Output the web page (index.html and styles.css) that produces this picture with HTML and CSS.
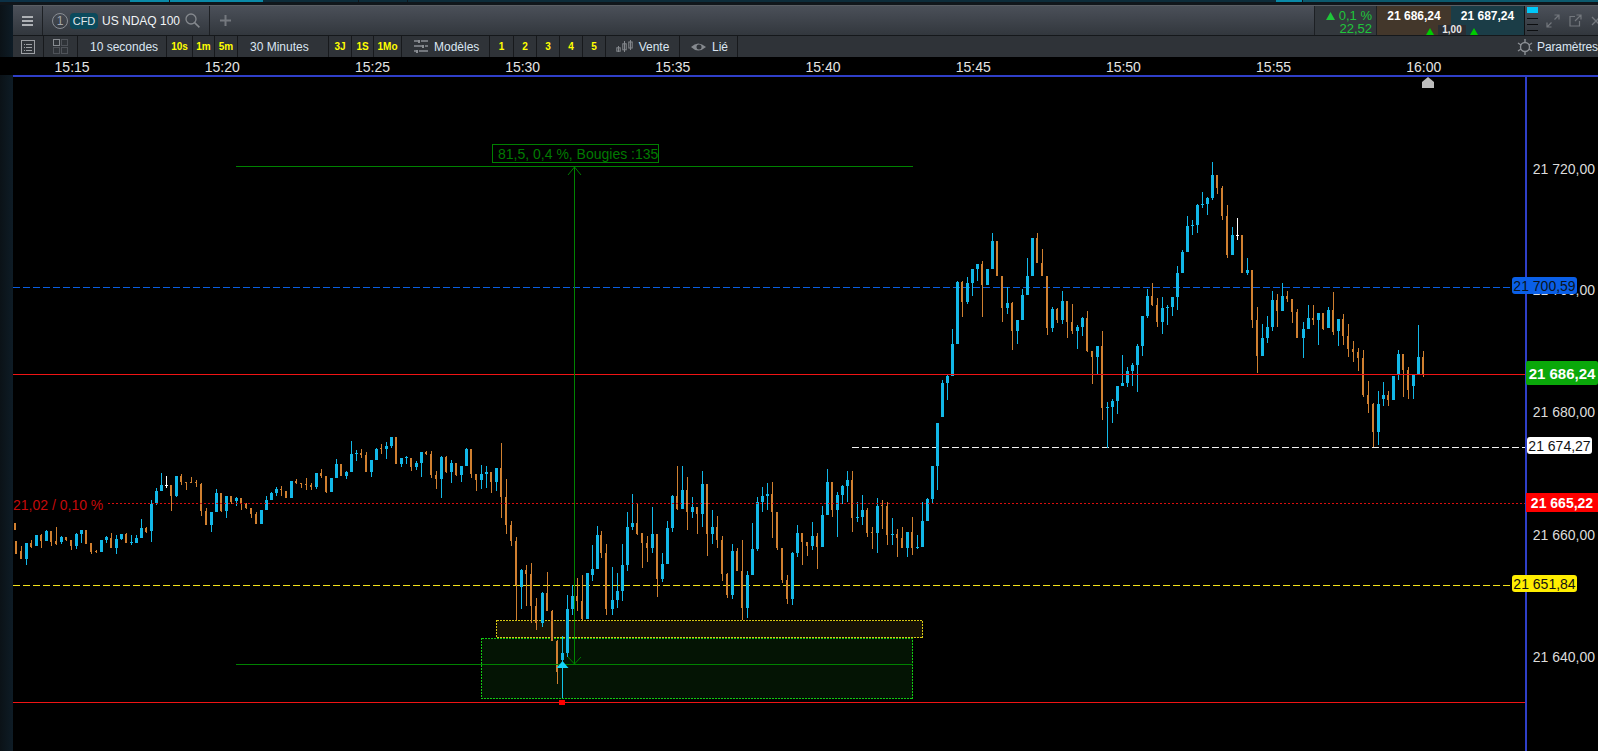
FILE: index.html
```html
<!DOCTYPE html>
<html lang="fr">
<head>
<meta charset="utf-8">
<title>US NDAQ 100</title>
<link rel="stylesheet" href="styles.css">
</head>
<body>
<div class="strip">
  <i class="seg seg-a"></i><i class="seg seg-b"></i><i class="seg seg-c"></i><i class="seg seg-d"></i><i class="seg seg-e"></i><i class="seg seg-f"></i><i class="seg seg-g"></i><i class="seg seg-h"></i>
</div>
<div class="frame">
  <div class="rail"></div>
  <div class="main">
    <header class="bar-top">
      <button class="menu" aria-label="Menu"><svg width="11" height="10" viewBox="0 0 11 10"><path d="M0 0h11v2H0zM0 4h11v2H0zM0 8h11v2H0z" fill="#aeb1b5"/></svg></button>
      <div class="symbol">
        <span class="circle">1</span>
        <span class="badge">CFD</span>
        <span class="name">US NDAQ 100</span>
        <svg class="search" width="15" height="15" viewBox="0 0 15 15"><circle cx="6" cy="6" r="5" fill="none" stroke="#85898e" stroke-width="1.3"/><path d="M9.6 9.6L14.4 14.4" stroke="#85898e" stroke-width="1.5"/></svg>
      </div>
      <svg class="plus" width="11" height="11" viewBox="0 0 11 11"><path d="M4.5 0h2v11h-2zM0 4.5h11v2H0z" fill="#74787e"/></svg>
      <div class="quotes">
        <div class="change">
          <div class="change-top"><svg width="9" height="8" viewBox="0 0 9 8"><path d="M4.5 0L9 8H0z" fill="#1fc63a"/></svg><span>0,1 %</span></div>
          <div>22,52</div>
        </div>
        <div class="price bid">21 686,24<svg class="tri" width="8" height="7" viewBox="0 0 8 7"><path d="M4 0L8 7H0z" fill="#0c0"/></svg></div>
        <div class="price ask">21 687,24<svg class="tri" width="8" height="7" viewBox="0 0 8 7"><path d="M4 0L8 7H0z" fill="#0c0"/></svg></div>
        <span class="spread">1,00</span>
        <div class="depth"><i class="depth-on"></i><i></i><i></i><i></i></div>
        <div class="win">
          <svg width="14" height="14" viewBox="0 0 14 14"><path d="M8.5 1H13v4.500M13 1L8.500 5.500M5.500 13H1V8.500M1 13l4.500-4.500" fill="none" stroke="#73777d" stroke-width="1.200"/></svg>
          <svg width="13" height="13" viewBox="0 0 13 13"><path d="M6 2.500H1v9.500h9.500V7M7.500 1H12v4.500M12 1L6 7" fill="none" stroke="#73777d" stroke-width="1.200"/></svg>
          <svg width="10" height="10" viewBox="0 0 10 10"><path d="M1 1l8 8M9 1l-8 8" fill="none" stroke="#73777d" stroke-width="1.300"/></svg>
        </div>
      </div>
    </header>
    <nav class="bar-tools">
      <div class="cell w31"><svg width="14" height="14" viewBox="0 0 14 14"><rect x=".5" y=".5" width="13" height="13" fill="none" stroke="#9da0a4"/><path d="M3 4h1v1H3zM5 4h6v1H5zM3 7h1v1H3zM5 7h6v1H5zM3 10h1v1H3zM5 10h6v1H5z" fill="#9da0a4"/></svg></div>
      <div class="cell w34"><svg width="15" height="15" viewBox="0 0 15 15"><rect x=".5" y=".5" width="6" height="6" fill="none" stroke="#888c91"/><path d="M8.500.5h6v6h-6zM.5 8.500h6v6h-6zM8.500 8.500h6v6h-6z" fill="none" stroke="#71757a" stroke-dasharray="1 1"/></svg></div>
      <div class="cell w89 start">10 secondes</div>
      <div class="cell w26 tf">10s</div>
      <div class="cell w22 tf">1m</div>
      <div class="cell w23 tf">5m</div>
      <div class="cell w91 start">30 Minutes</div>
      <div class="cell w23 tf">3J</div>
      <div class="cell w22 tf">1S</div>
      <div class="cell w28 tf">1Mo</div>
      <div class="cell w88 start gap"><svg width="14" height="13" viewBox="0 0 14 13"><path d="M0 1h4M7 1h7M0 6h8M11 6h3M0 11h2M5 11h9" stroke="#8b8f94" stroke-width="1.500"/><path d="M4 0h2v3H4zM8 5h2v3H8zM2 10h2v3H2z" fill="#8b8f94"/></svg>Modèles</div>
      <div class="cell w24 tf">1</div>
      <div class="cell w23 tf">2</div>
      <div class="cell w23 tf">3</div>
      <div class="cell w23 tf">4</div>
      <div class="cell w23 tf">5</div>
      <div class="cell w74 gap"><svg width="17" height="13" viewBox="0 0 17 13"><path d="M2.500 6v6M8.500 1v11M14.500 0v10" stroke="#85898e"/><rect x=".8" y="7.800" width="3.400" height="3.400" fill="none" stroke="#85898e"/><rect x="6.800" y="3.800" width="3.400" height="6" fill="none" stroke="#85898e"/><rect x="12.800" y="2" width="3.400" height="6" fill="none" stroke="#85898e"/></svg>Vente</div>
      <div class="cell w58 gap nudge"><svg width="15" height="10" viewBox="0 0 15 10"><path d="M0 5Q7-2 15 5Q7 12 0 5z" fill="#85898e"/><circle cx="8" cy="5" r="2.500" fill="#2e3237"/></svg>Lié</div>
      <div class="settings"><svg width="16" height="16" viewBox="0 0 16 16"><circle cx="8" cy="8" r="4.500" fill="none" stroke="#8b8f94" stroke-width="1.400"/><path d="M8 0v3.500M8 12.500V16M1 4l3 2M12 10l3 2M1 12l3-2M12 6l3-2" stroke="#8b8f94" stroke-width="1.400"/></svg><span>Paramètres</span></div>
    </nav>
    <div class="times">
      <span>15:15</span><span>15:20</span><span>15:25</span><span>15:30</span><span>15:35</span><span>15:40</span><span>15:45</span><span>15:50</span><span>15:55</span><span>16:00</span>
    </div>
    <section class="chart">
      <svg class="plot" id="plot" width="1585" height="674" viewBox="13 77 1585 674">
        <g shape-rendering="crispEdges">
          <path d="M13 287.500H1512" stroke="#0a5fe0" stroke-dasharray="7 3"/>
          <path d="M13 585.500H1512" stroke="#f2e21a" stroke-dasharray="7 3"/>
          <path d="M852 447.500H1527" stroke="#f2f2f2" stroke-dasharray="7 3"/>
          <rect x="496.500" y="620.500" width="426" height="17" fill="#171204" stroke="#d8c814" stroke-dasharray="2 1"/>
          <rect x="481.500" y="638.500" width="431" height="60" fill="#041404" stroke="#12c812" stroke-dasharray="2 1"/>
          <path d="M1525 77h2v674h-2z" fill="#2f3fc8"/>
        </g>
        <g id="candles" shape-rendering="crispEdges"></g>
        <g shape-rendering="crispEdges">
          <path d="M13 374.500H1525" stroke="#f01414"/>
          <path d="M13 702.500H1525" stroke="#f01414"/>
          <path d="M108 503.500H1525" stroke="#d80e0e" stroke-dasharray="2 2"/>
          <path d="M236 166.500H913M236 664.500H913M574.500 166V664" stroke="#008200"/>
        </g>
        <path d="M568 175L574.500 167L581 175M568 657L574.500 664L581 657" fill="none" stroke="#007a00"/>
        <path d="M562 668h1v30h-1z" fill="#12c4e8"/>
        <path d="M562.500 661L568.500 668H556.500z" fill="#12d4fa"/>
        <rect x="559" y="700" width="6" height="5" fill="#f00"/>
        <path d="M1422 88V82L1428 77L1434 82V88z" fill="#bdbdbd"/>
      </svg>
      <div class="note">81,5, 0,4 %, Bougies :135</div>
      <div class="pct">21,02 / 0,10 %</div>
      <div class="tick t720">21 720,00</div>
      <div class="tick t700">21 700,00</div>
      <div class="tick t680">21 680,00</div>
      <div class="tick t660">21 660,00</div>
      <div class="tick t640">21 640,00</div>
      <div class="lab lab-blue">21 700,59</div>
      <div class="lab lab-green">21 686,24</div>
      <div class="lab lab-white">21 674,27</div>
      <div class="lab lab-red">21 665,22</div>
      <div class="lab lab-yellow">21 651,84</div>
    </section>
  </div>
</div>
<script src="chart.js"></script>
</body>
</html>
```
FILE: styles.css
```css
* { box-sizing: border-box; }
html, body { margin: 0; height: 100%; overflow: hidden; background: #000; }
body { font-family: "Liberation Sans", Arial, sans-serif; color: #dfe6ee; }
i { display: block; }

.strip { display: flex; height: 5px; background: #10161b; align-items: flex-start; }
.seg { height: 2px; }
.seg-a { width: 130px; background: #0c3146; }
.seg-b { width: 39px; background: #0a8aa8; margin-right: 1px; }
.seg-c { width: 93px; background: #0a8aa8; }
.seg-d { width: 95px; background: #0d2c3a; margin-right: 1px; }
.seg-e { width: 48px; background: #0d2c3a; margin-right: 1px; }
.seg-f { width: 868px; background: #0d2c3a; }
.seg-g { width: 26px; background: #0a8aa8; margin-right: 1px; }
.seg-h { flex: 1; background: #0c5a6e; }

.frame { display: flex; height: 746px; }
.rail { width: 13px; background: linear-gradient(90deg, #0b1217, #0e1c26); }
.main { flex: 1; display: flex; flex-direction: column; min-width: 0; }

.bar-top { height: 31px; display: flex; align-items: center; background: linear-gradient(#4b5059, #32373d); border-bottom: 1px solid #15181b; border-top: 1px solid #5a5e64; }
.menu { width: 30px; height: 100%; padding: 0; background: none; border: 0; border-right: 1px solid #1d2024; display: flex; align-items: center; justify-content: center; }
.symbol { width: 167px; height: 100%; display: flex; align-items: center; padding-left: 9px; border-right: 1px solid #1d2024; }
.circle { width: 16px; height: 16px; border: 1px solid #8a8e94; border-radius: 50%; font-size: 12px; color: #a4a8ad; display: flex; align-items: center; justify-content: center; margin-right: 2px; }
.badge { width: 28px; height: 16px; border-radius: 4px; background: #0b4a5c; font-size: 11px; color: #e2e8ec; display: flex; align-items: center; justify-content: center; margin-right: 4px; }
.name { font-size: 12px; color: #f1f4f6; margin-right: 5px; white-space: nowrap; }
.plus { margin-left: 10px; }

.quotes { margin-left: auto; height: 100%; display: flex; align-items: stretch; position: relative; }
.change { width: 63px; font-size: 13px; line-height: 13px; color: #1fc63a; text-align: right; padding: 3px 4px 0 0; background: #33383d; border-left: 1px solid #1d2024; border-right: 1px solid #1d2024; }
.change-top { display: flex; justify-content: flex-end; align-items: center; gap: 4px; }
.price { width: 74px; position: relative; font-size: 12px; font-weight: 700; color: #fff; text-align: center; padding-top: 3px; line-height: 15px; }
.bid { background: #43372b; }
.ask { background: #1b3d47; border-right: 1px solid #101214; }
.tri { position: absolute; top: 22px; }
.bid .tri { left: 49px; }
.ask .tri { left: 19px; }
.spread { position: absolute; left: 124px; top: 19px; width: 28px; height: 10px; line-height: 10px; background: #2a2e33; color: #e8e8e8; font-size: 10px; font-weight: 700; text-align: center; }
.depth { width: 11px; margin-left: 2px; padding-top: 1px; display: flex; flex-direction: column; gap: 5px; }
.depth i { height: 1px; background: #0c0e10; }
.depth i.depth-on { height: 6px; background: #00c8f8; }
.win { width: 60px; display: flex; align-items: center; gap: 9px; padding-left: 8px; overflow: hidden; flex: none; }
.win svg { flex: none; }

.bar-tools { height: 21px; display: flex; align-items: stretch; background: #2f3338; font-size: 12px; color: #dbe6f2; }
.cell { border-right: 1px solid #17191c; display: flex; align-items: center; justify-content: center; white-space: nowrap; }
.start { justify-content: flex-start; padding-left: 12px; }
.gap { gap: 6px; }
.nudge { padding-left: 2px; }
.tf { color: #ff0; font-weight: 700; font-size: 10px; }
.w22 { width: 22px; } .w23 { width: 23px; } .w24 { width: 24px; } .w26 { width: 26px; } .w28 { width: 28px; }
.w31 { width: 31px; } .w34 { width: 34px; } .w58 { width: 58px; } .w74 { width: 74px; } .w88 { width: 88px; } .w89 { width: 89px; } .w91 { width: 91px; }
.settings { margin-left: auto; width: 81px; flex: none; display: flex; align-items: center; gap: 4px; white-space: nowrap; letter-spacing: -.1px; }
.settings svg { flex: none; }

.times { height: 18px; flex: none; display: flex; margin-left: -16px; background: #000; font-size: 14px; line-height: 20px; color: #e4e4e4; }
.times span { width: 150.2px; flex: none; text-align: center; }

.chart { flex: 1; position: relative; background: #000; border-top: 2px solid #2f3fc8; overflow: hidden; }
.plot { position: absolute; left: 0; top: 0; display: block; }
.note { position: absolute; left: 479px; top: 67px; width: 167px; height: 19px; border: 1px solid #008000; color: #007a00; font-size: 14px; line-height: 18px; padding-left: 5px; white-space: nowrap; overflow: hidden; }
.pct { position: absolute; left: 0; top: 419px; font-size: 14px; line-height: 18px; color: #c40a0a; }
.tick { position: absolute; right: 3px; font-size: 14px; line-height: 16px; color: #dcdcdc; }
.t720 { top: 84px; } .t700 { top: 205px; } .t680 { top: 327px; } .t660 { top: 450px; } .t640 { top: 572px; }
.lab { position: absolute; font-size: 14px; display: flex; align-items: center; justify-content: center; white-space: nowrap; }
.lab-blue { left: 1499px; width: 65px; top: 200px; height: 17px; background: #0a5fe8; color: #0b1420; border-radius: 3px; }
.lab-green { left: 1513px; width: 72px; top: 284px; height: 24px; background: #0aa80a; color: #fff; font-weight: 700; font-size: 15px; border-radius: 2px; }
.lab-white { left: 1514px; width: 65px; top: 360px; height: 17px; background: #fff; color: #111; border-radius: 3px; }
.lab-red { left: 1513px; width: 72px; top: 416px; height: 19px; background: #f00; color: #fff; font-weight: 700; }
.lab-yellow { left: 1499px; width: 65px; top: 498px; height: 17px; background: #fe0; color: #111; border-radius: 3px; }
```
FILE: chart.js
```js
// Each block is measured at 3x scale from an origin (ox, oy).
var blocks = [
  [0, 420, "46,310,310,330,330,o 49,363,363,402,402,o 63,378,393,417,417,o 79,369,369,417,435,b 93,361,370,380,384,o 108,344,345,378,378,b 123,342,345,363,384,o 139,331,333,363,363,b 153,333,333,366,378,o 168,321,363,373,375,o 184,348,351,366,372,b 198,351,351,361,363,o 213,360,360,378,390,o 229,339,342,378,387,b 244,330,330,342,369,b 258,330,330,372,372,o 273,369,369,396,402,o 288,391,393,396,399,o 304,360,360,396,396,b 319,349,351,360,369,b 333,339,354,384,384,o 349,345,357,384,402,b 364,342,342,357,360,b 378,339,342,369,369,o 394,345,366,369,375,b 409,345,354,369,369,b 424,297,324,354,354,b 439,321,324,336,339,o 454,240,252,333,366,b 469,205,213,250,255,b 484,159,195,213,213,b 499,168,196,199,205,w 514,195,195,228,273,o 529,168,168,228,231,b 543,162,168,186,195,o 558,186,186,188,210,o 573,171,186,189,189,o 589,180,186,186,201,o 603,189,192,273,288,o 618,264,273,315,315,o 634,276,276,315,336,b 648,207,219,276,276,b 663,219,219,273,276,o 678,228,228,273,294,b 693,228,228,246,252,o 709,231,234,243,258,b 723,234,234,249,270,o 738,249,249,264,267,o 753,264,264,282,294,o 768,276,282,312,312,o 784,270,270,312,312,b 799,228,240,270,270,b 814,216,219,240,240,b 829,201,207,219,228,b 844,198,207,209,228,o 859,213,213,234,234,o 874,183,183,234,234,b 889,177,183,189,192,o"],
  [300, 420, "4,189,189,191,204,o 19,174,192,194,210,o 34,189,195,201,210,o 49,159,159,201,207,b 64,147,159,168,174,o 79,168,168,216,219,o 94,174,174,216,216,b 109,117,132,174,174,b 124,132,132,168,168,o 139,153,156,168,177,b 154,63,102,156,156,b 169,90,99,102,123,b 184,87,99,105,114,o 199,96,105,156,156,o 214,120,120,156,171,b 229,84,87,120,120,b 244,72,84,87,102,o 259,66,78,87,117,b 274,51,51,78,84,b 289,51,51,132,132,o 304,114,114,132,141,b 319,108,111,114,132,b 334,114,114,141,153,o 349,123,129,141,150,b 364,96,96,129,171,b 379,93,96,102,105,o 394,93,102,165,174,o 409,153,165,177,207,o 424,108,111,177,234,b 439,108,111,156,159,o 454,120,129,156,189,b 469,129,129,165,168,o 484,138,138,165,186,b 499,84,87,138,138,b 514,87,87,162,174,o 529,162,162,180,213,o 544,135,162,180,207,b 559,138,156,162,204,b 574,156,156,186,219,o 589,144,144,186,213,b 604,69,144,231,294,o 619,177,231,315,342,o 634,303,315,363,378,o 649,351,363,495,600,o 664,447,450,501,567,b 679,435,450,462,558,o 694,430,462,558,609,o 709,534,558,609,630,o 727,516,519,609,621,b 742,456,519,573,573,o 757,570,573,663,663,o 877,375,447,465,483,b 892,318,345,447,447,b"],
  [450, 580, "321,180,183,276,312,o 337,168,219,240,270,b 352,45,87,219,231,b 367,15,48,87,105,b 382,-6,48,63,93,o 397,-15,63,117,120,o 412,-21,-21,117,117,b"],
  [600, 440, "5,273,285,339,354,o 20,312,339,507,525,o 37,381,480,507,525,b 52,399,453,480,504,b 67,312,375,453,483,b 82,216,261,375,393,b 97,162,249,261,270,b 112,192,249,282,285,o 127,279,279,309,384,o 142,288,309,324,366,o 157,201,282,324,339,b 172,282,282,417,471,o 187,339,372,417,426,b 202,243,264,372,372,b 217,165,168,264,276,b 232,78,168,207,210,o 247,78,150,207,207,b 262,111,150,216,270,o 277,171,201,216,234,b 292,201,201,222,282,o 307,93,132,222,261,b 322,132,132,282,348,o 337,210,261,282,312,b 352,228,261,300,324,o 367,288,300,402,423,o 382,399,402,465,474,o 397,312,333,465,477,b 412,324,333,393,393,o 427,300,393,504,540,o 442,393,405,504,534,b 457,249,327,405,405,b 472,171,186,327,333,b 487,141,168,186,216,b 502,129,162,168,210,b 517,126,162,216,294,o 532,216,216,324,330,o 547,324,324,420,429,o 562,405,420,477,492,o 577,336,339,477,495,b 592,255,279,339,351,b 607,279,279,306,375,o 622,306,306,318,348,o 637,246,288,318,330,b 652,279,288,321,387,o 667,198,225,321,321,b 682,87,126,225,225,b 697,126,126,210,231,o 712,156,165,210,291,b 727,135,138,165,192,b 742,93,120,138,186,b 757,93,120,234,276,o 772,186,232,234,246,b 787,165,210,231,255,b 802,204,210,279,291,o 817,261,276,279,327,o 832,174,198,279,339,b 847,180,195,197,267,o 862,186,198,285,315,o 877,234,282,285,315,b 892,267,282,294,351,o 907,261,294,324,324,o 922,276,276,324,351,b 937,231,276,324,345,o 952,285,321,324,327,b 967,186,243,321,321,b 982,174,177,243,243,b 997,78,78,177,189,b 1012,-51,-51,78,150,b"],
  [920, 220, "67,480,489,591,591,b 82,462,468,489,540,b 97,327,372,468,468,b 112,183,186,372,372,b 127,183,186,246,291,o 142,171,189,246,252,b 157,147,147,189,228,b 172,132,132,147,183,b 187,123,132,195,291,o 202,147,147,195,195,b 217,39,63,147,147,b 232,63,63,168,168,o 247,168,168,264,306,o 262,201,249,264,282,b 277,246,249,333,390,o 292,300,300,333,372,b 307,207,225,300,300,b 322,114,168,225,225,b 337,54,54,168,168,b 352,39,54,129,129,o 367,87,129,168,168,o 382,168,168,324,345,o 397,261,267,324,336,b 412,264,267,300,309,o 427,213,243,300,312,b 442,243,243,306,354,o 457,252,306,333,342,o 472,315,321,333,387,b 487,291,294,321,348,b 502,273,294,393,396,o 517,393,393,411,492,o 532,378,378,411,462,b 547,333,378,564,600,o 562,546,561,564,684,b 577,537,543,561,609,b 592,498,498,543,582,b"],
  [1000, 140, "352,738,738,783,822,b 367,645,729,738,738,b 382,682,693,729,741,b 397,669,675,693,738,b 412,612,618,675,756,b 427,528,528,618,648,b 442,447,468,528,534,b 457,429,468,495,498,o 472,474,495,546,561,o 487,471,504,546,582,b 502,495,501,504,555,b 517,471,471,501,528,b 532,378,399,471,510,b 547,330,336,399,399,b 562,228,258,336,336,b 577,240,255,258,285,b 592,192,195,255,279,b 607,156,192,195,204,b 622,171,174,192,225,b 637,66,105,174,180,b 652,105,105,144,162,o 667,138,144,228,240,o 682,195,228,345,354,o 697,261,285,345,345,b 712,234,285,288,300,w 727,285,285,399,399,o 742,354,390,399,405,b 757,390,390,540,564,o 772,501,540,648,699,o 787,552,594,648,648,b 802,528,561,594,609,b 817,453,480,561,573,b 832,462,480,513,561,o 847,429,468,513,513,b 862,453,468,477,486,o 877,477,477,516,549,o"],
  [1280, 270, "52,117,126,204,204,o 70,156,177,204,264,b 85,105,144,177,177,b 100,105,144,150,165,o 115,129,129,150,225,b 130,129,129,177,180,o 145,111,120,174,174,b 160,66,120,186,195,o 175,147,147,183,228,b 190,132,147,198,225,o 205,162,198,237,261,o 220,213,237,246,276,o 235,234,246,264,303,o 250,240,264,375,381,o 265,333,375,402,429,o 280,399,402,486,531,o 295,363,402,486,525,b 310,336,375,387,408,b 325,363,375,390,408,o 340,318,318,390,390,b 355,240,252,315,330,b 370,252,252,300,381,o 385,291,300,360,387,o 400,315,315,348,387,b 415,165,261,312,312,b 430,243,261,315,321,o"]
];
var fills = { b: "#12b8e8", o: "#d08030", w: "#ffffff" };
var widths = { b: 3, o: 2, w: 3 };
var group = document.getElementById("candles");
function bar(x, y, w, h, fill) {
  if (h < 1) h = 1;
  var r = document.createElementNS("http://www.w3.org/2000/svg", "rect");
  r.setAttribute("x", x); r.setAttribute("y", y);
  r.setAttribute("width", w); r.setAttribute("height", h);
  r.setAttribute("fill", fill);
  group.appendChild(r);
}
blocks.forEach(function (block) {
  var ox = block[0], oy = block[1];
  block[2].split(" ").forEach(function (row) {
    var p = row.split(",");
    var xc = Math.floor(ox + p[0] / 3);
    var wt = Math.round(oy + p[1] / 3), bt = Math.round(oy + p[2] / 3);
    var bb = Math.round(oy + p[3] / 3), wb = Math.round(oy + p[4] / 3);
    var c = p[5];
    bar(xc, wt, 1, wb - wt, fills[c]);
    bar(xc - 1, bt, widths[c], bb - bt, fills[c]);
  });
});
```
